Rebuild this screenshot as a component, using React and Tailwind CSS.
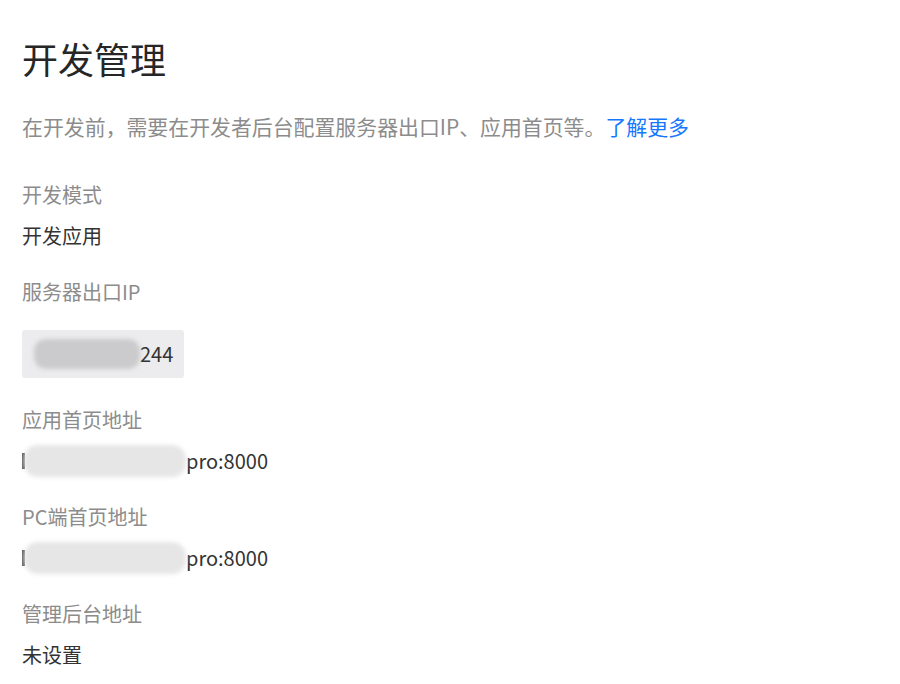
import React from 'react';

const font = { fontFamily: '"Noto Sans CJK SC", "Noto Sans", sans-serif' };

const Label = ({ children, className = '' }) => (
  <div className={`text-[20px] leading-[28px] text-[#8c8c8c] ${className}`}>{children}</div>
);

const Value = ({ children, className = '' }) => (
  <div className={`text-[20px] leading-[28px] text-[#333333] ${className}`}>{children}</div>
);

// blurred (masked) address value
const MaskedValue = ({ tail, width }) => (
  <div className="mt-[13px] flex items-center h-[28px] text-[20px] leading-[28px] text-[#333333]">
    <span className="w-[3px] h-[16px] bg-[#555]" />
    <span
      className="h-[32px] rounded-[14px] bg-[#e6e6e6] blur-[2px] -ml-[1px]"
      style={{ width }}
    />
    <span>{tail}</span>
  </div>
);

export default function App() {
  return (
    <div className="bg-white min-h-screen pl-[22px] pt-[33px]" style={font}>
      <h1 className="text-[36px] leading-[50px] text-[#262626] font-normal">开发管理</h1>

      <p className="mt-[28px] text-[20.9px] leading-[30px] text-[#8c8c8c]">
        在开发前，需要在开发者后台配置服务器出口IP、应用首页等。
        <a className="text-[#1677ff] cursor-pointer">了解更多</a>
      </p>

      <Label className="mt-[40px]">开发模式</Label>
      <Value className="mt-[13px]">开发应用</Value>

      <Label className="mt-[28px]">服务器出口IP</Label>
      <div className="mt-[24px] inline-flex items-center h-[48px] w-[162px] pl-[12px] bg-[#ececee] rounded-[3px] text-[20px] text-[#333333]">
        <span className="w-[106px] h-[30px] rounded-[12px] bg-[#cbcbcd] blur-[2px]" />
        <span>244</span>
      </div>

      <Label className="mt-[28px]">应用首页地址</Label>
      <MaskedValue tail="pro:8000" width="162px" />

      <Label className="mt-[28px]">PC端首页地址</Label>
      <MaskedValue tail="pro:8000" width="162px" />

      <Label className="mt-[28px]">管理后台地址</Label>
      <Value className="mt-[13px]">未设置</Value>
    </div>
  );
}
